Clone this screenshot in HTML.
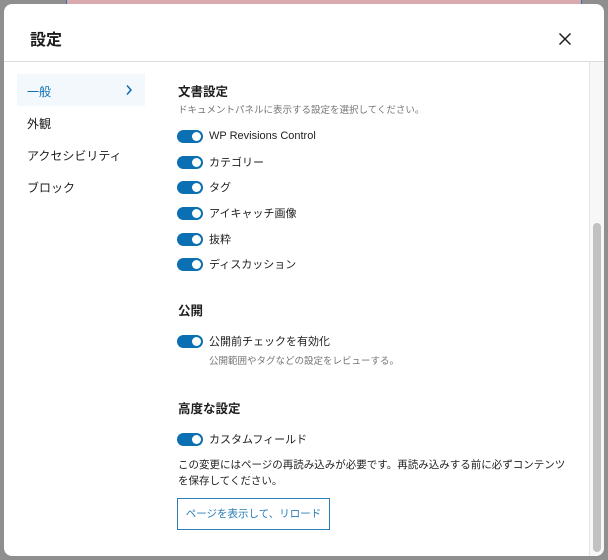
<!DOCTYPE html>
<html><head><meta charset="utf-8"><style>
*{margin:0;padding:0;box-sizing:border-box}
body{width:608px;height:560px;background:#8f8f8f;position:relative;overflow:hidden;font-family:"Liberation Sans","Noto Sans CJK JP",sans-serif;color:#1e1e1e}
.strip{position:absolute;left:66px;top:0;width:516px;height:6px;background:#d9a9b0;border-left:1px solid #3a6fb0;border-right:1px solid #3a6fb0}
.modal{position:absolute;left:4px;top:4px;width:600px;height:552px;background:#fff;border-radius:8px;overflow:hidden}
.t{position:absolute;white-space:nowrap}
.hdr{left:26px;top:22px;font-size:16px;font-weight:bold}
.hline{position:absolute;left:0;top:57px;width:600px;height:1px;background:#ddd}
.sel{position:absolute;left:13px;top:70px;width:128px;height:32px;background:#f3f8fc}
.nav{font-size:12px;left:23px}
.h2{font-size:12.5px;font-weight:bold;left:174px}
.lbl{font-size:11px;left:205px}
.sm{font-size:9.5px;color:#757575}
.tg{position:absolute;left:173px;width:26px;height:13px;border-radius:7px;background:#0a6fb3}
.tg::after{content:"";position:absolute;right:2px;top:2px;width:9px;height:9px;border-radius:50%;background:#fff}
.track{position:absolute;left:585px;top:58px;width:15px;height:494px;background:#f7f7f7;border-left:1px solid #e4e4e4}
.thumb{position:absolute;left:589px;top:219px;width:8px;height:329px;background:#c1c1c1;border-radius:4px}
.btn{position:absolute;left:173px;top:494px;width:153px;height:32px;border:1px solid #2a7db5;color:#2a7db5;font-size:10.5px;line-height:30px;text-align:center}
</style></head><body>
<div class="strip"></div>
<div class="modal">
<div class="t hdr">設定</div>
<svg style="position:absolute;left:554px;top:28px" width="14" height="14" viewBox="0 0 14 14"><path d="M1.5 1.5L12.5 12.5M12.5 1.5L1.5 12.5" stroke="#1e1e1e" stroke-width="1.5"/></svg>
<div class="hline"></div>
<div class="sel"></div>
<div class="t nav" style="top:79px;color:#0a6fb3">一般</div>
<svg style="position:absolute;left:121px;top:80px" width="8" height="12" viewBox="0 0 8 12"><path d="M2 1.5L6 6L2 10.5" stroke="#0a6fb3" stroke-width="1.5" fill="none"/></svg>
<div class="t nav" style="top:111px">外観</div>
<div class="t nav" style="top:143px">アクセシビリティ</div>
<div class="t nav" style="top:175px">ブロック</div>

<div class="t h2" style="top:77px">文書設定</div>
<div class="t sm" style="left:174px;top:98px">ドキュメントパネルに表示する設定を選択してください。</div>
<div class="tg" style="top:126px"></div><div class="t lbl" style="top:126px">WP Revisions Control</div>
<div class="tg" style="top:152px"></div><div class="t lbl" style="top:150px">カテゴリー</div>
<div class="tg" style="top:177px"></div><div class="t lbl" style="top:175px">タグ</div>
<div class="tg" style="top:203px"></div><div class="t lbl" style="top:201px">アイキャッチ画像</div>
<div class="tg" style="top:229px"></div><div class="t lbl" style="top:227px">抜粋</div>
<div class="tg" style="top:254px"></div><div class="t lbl" style="top:252px">ディスカッション</div>

<div class="t h2" style="top:296px">公開</div>
<div class="tg" style="top:331px"></div><div class="t lbl" style="top:329px">公開前チェックを有効化</div>
<div class="t sm" style="left:205px;top:349px">公開範囲やタグなどの設定をレビューする。</div>

<div class="t h2" style="top:394px">高度な設定</div>
<div class="tg" style="top:429px"></div><div class="t lbl" style="top:427px">カスタムフィールド</div>
<div class="t" style="left:174px;top:453px;font-size:10.5px;line-height:16px">この変更にはページの再読み込みが必要です。再読み込みする前に必ずコンテンツ<br>を保存してください。</div>
<div class="btn">ページを表示して、リロード</div>
<div class="track"></div><div class="thumb"></div>
</div>
</body></html>
